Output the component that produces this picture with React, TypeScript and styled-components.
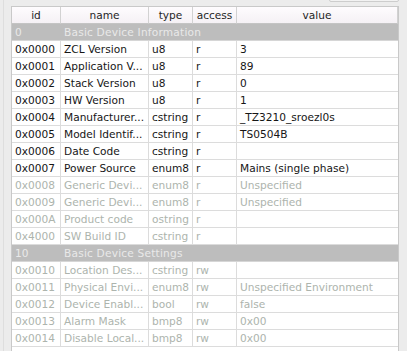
import styled, { createGlobalStyle } from "styled-components";

type Attr = {
  id: string;
  name: string;
  type: string;
  access: string;
  value: string;
  off?: boolean;
};
type Group = {
  id: string;
  title: string;
  rows: Attr[];
};

const Global = createGlobalStyle`
  html, body {
    margin: 0;
    padding: 0;
    background: #ececec;
    overflow: hidden;
  }
  body {
    font-family: "DejaVu Sans", "Liberation Sans", sans-serif;
  }
`;

const Page = styled.div`
  height: 351px;
  margin-left: 3px;
  padding: 0 8px 0 7px;
  border-left: 1px solid #dedede;
  box-sizing: border-box;
  display: flex;
  flex-direction: column;
`;

const Toolbar = styled.div`
  height: 6px;
  display: flex;
  justify-content: flex-end;
  overflow: hidden;
`;

const ToolButton = styled.div`
  width: 70px;
  height: 22px;
  margin-top: -20px;
  box-sizing: border-box;
  border: 1px solid #cdcdcd;
  border-radius: 2px;
  background: #f2f2f2;
`;

const Frame = styled.div`
  flex: 1;
  border: 1px solid #c9c9c9;
  border-bottom: none;
  background: #ffffff;
  overflow: hidden;
`;

const Grid = styled.div`
  display: grid;
  grid-template-columns: 49px 88px 44px 44px 1fr;
  font-size: 10.6px;
  line-height: 16px;
`;

const Head = styled.div`
  height: 16px;
  text-align: center;
  color: #262626;
  background: linear-gradient(to bottom, #fefcfe, #f5f1f5);
  border-right: 1px solid #d2d2d2;
  border-bottom: 1px solid #c4c4c4;
  white-space: nowrap;
  overflow: hidden;
  &:last-child {
    border-right: none;
  }
`;

const GroupId = styled.div`
  height: 16px;
  padding-left: 3px;
  color: #e9e9e9;
  background: #bdbdbd;
  border-bottom: 1px solid #d6d6d6;
`;

const GroupTitle = styled(GroupId)`
  grid-column: span 4;
  letter-spacing: 0.2px;
`;

const Cell = styled.div<{ $off?: boolean }>`
  height: 16px;
  padding-left: 3px;
  color: ${(p) => (p.$off ? "#adb4ad" : "#161616")};
  border-right: 1px solid #dcdcdc;
  border-bottom: 1px solid #dcdcdc;
  white-space: nowrap;
  overflow: hidden;
`;

const ValueCell = styled(Cell)`
  border-right: none;
`;

const groups: Group[] = [
  {
    id: "0",
    title: "Basic Device Information",
    rows: [
      { id: "0x0000", name: "ZCL Version", type: "u8", access: "r", value: "3" },
      { id: "0x0001", name: "Application V...", type: "u8", access: "r", value: "89" },
      { id: "0x0002", name: "Stack Version", type: "u8", access: "r", value: "0" },
      { id: "0x0003", name: "HW Version", type: "u8", access: "r", value: "1" },
      { id: "0x0004", name: "Manufacturer...", type: "cstring", access: "r", value: "_TZ3210_sroezl0s" },
      { id: "0x0005", name: "Model Identif...", type: "cstring", access: "r", value: "TS0504B" },
      { id: "0x0006", name: "Date Code", type: "cstring", access: "r", value: "" },
      { id: "0x0007", name: "Power Source", type: "enum8", access: "r", value: "Mains (single phase)" },
      { id: "0x0008", name: "Generic Devi...", type: "enum8", access: "r", value: "Unspecified", off: true },
      { id: "0x0009", name: "Generic Devi...", type: "enum8", access: "r", value: "Unspecified", off: true },
      { id: "0x000A", name: "Product code", type: "ostring", access: "r", value: "", off: true },
      { id: "0x4000", name: "SW Build ID", type: "cstring", access: "r", value: "", off: true },
    ],
  },
  {
    id: "10",
    title: "Basic Device Settings",
    rows: [
      { id: "0x0010", name: "Location Des...", type: "cstring", access: "rw", value: "", off: true },
      { id: "0x0011", name: "Physical Envi...", type: "enum8", access: "rw", value: "Unspecified Environment", off: true },
      { id: "0x0012", name: "Device Enabl...", type: "bool", access: "rw", value: "false", off: true },
      { id: "0x0013", name: "Alarm Mask", type: "bmp8", access: "rw", value: "0x00", off: true },
      { id: "0x0014", name: "Disable Local...", type: "bmp8", access: "rw", value: "0x00", off: true },
    ],
  },
];

const heads = ["id", "name", "type", "access", "value"];

export default function App() {
  return (
    <>
      <Global />
      <Page>
        <Toolbar>
          <ToolButton />
        </Toolbar>
        <Frame>
          <Grid>
            {heads.map((h) => (
              <Head key={h}>{h}</Head>
            ))}
            {groups.map((g) => [
              <GroupId key={g.id + "-id"}>{g.id}</GroupId>,
              <GroupTitle key={g.id + "-title"}>{g.title}</GroupTitle>,
              ...g.rows.map((r) => [
                <Cell key={r.id + "a"} $off={r.off}>{r.id}</Cell>,
                <Cell key={r.id + "b"} $off={r.off}>{r.name}</Cell>,
                <Cell key={r.id + "c"} $off={r.off}>{r.type}</Cell>,
                <Cell key={r.id + "d"} $off={r.off}>{r.access}</Cell>,
                <ValueCell key={r.id + "e"} $off={r.off}>{r.value}</ValueCell>,
              ]),
            ])}
          </Grid>
        </Frame>
      </Page>
    </>
  );
}
